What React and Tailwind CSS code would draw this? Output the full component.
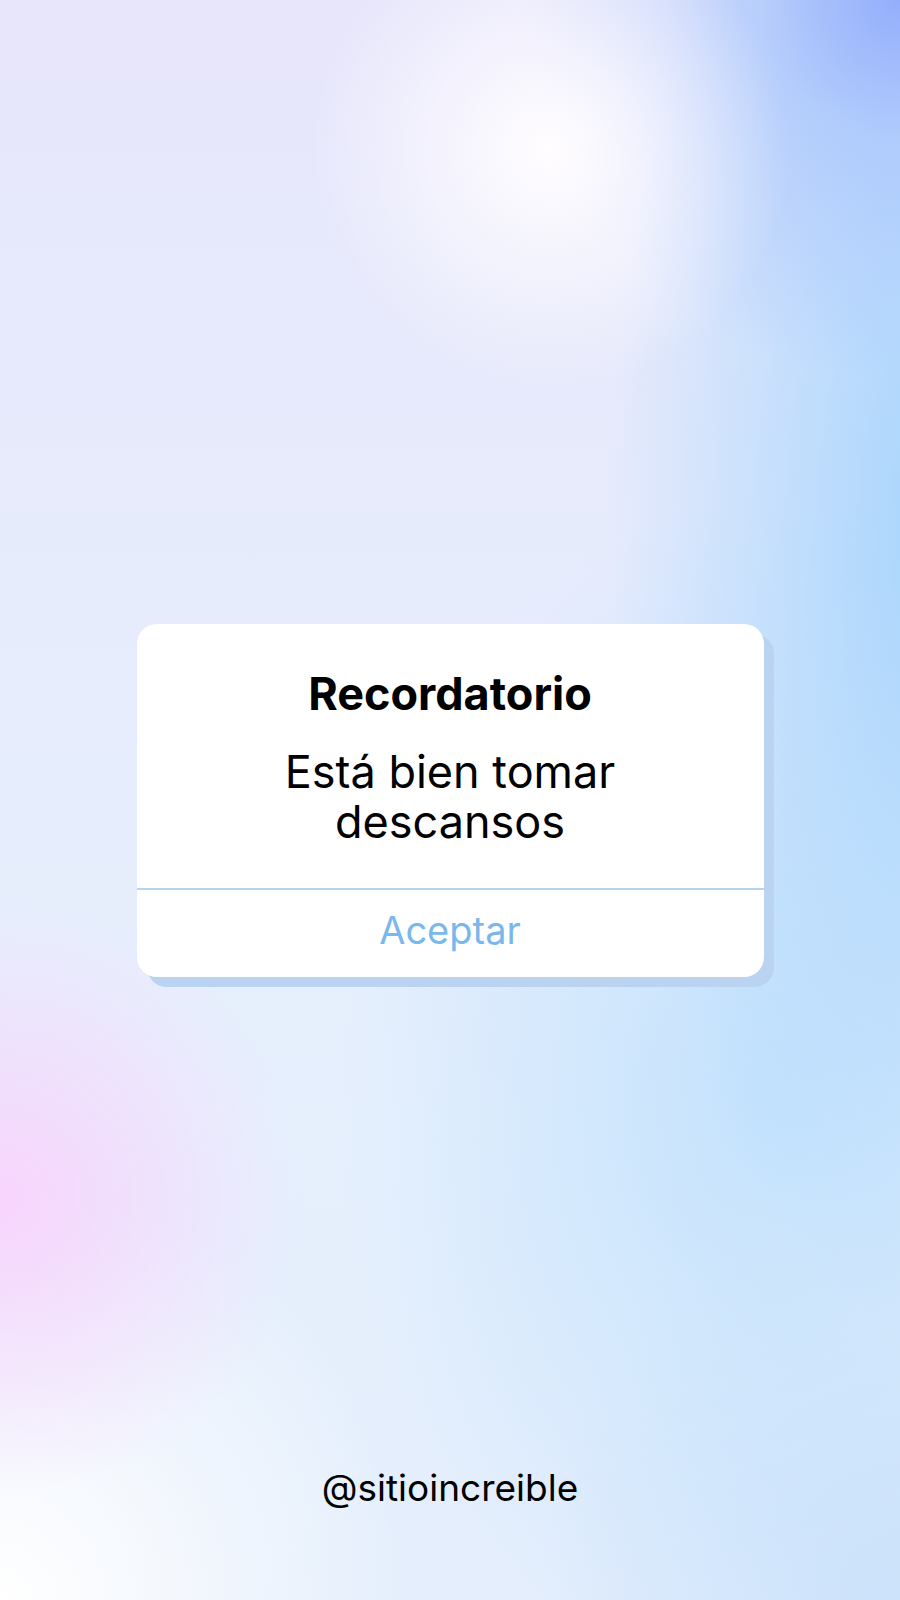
export default function App() {
  return (
    <div
      className="w-[900px] h-[1600px] flex flex-col font-['Inter',sans-serif] bg-[radial-gradient(circle_at_550px_150px,rgba(255,253,255,1)_0px,rgba(255,253,255,0)_240px),radial-gradient(circle_at_900px_0px,rgba(148,174,252,1)_0px,rgba(160,192,252,0.6)_140px,rgba(170,200,252,0)_380px),radial-gradient(ellipse_330px_820px_at_940px_520px,rgba(166,212,253,1)_0px,rgba(166,212,253,0)_100%),radial-gradient(ellipse_420px_600px_at_760px_1100px,rgba(188,223,252,0.8)_0px,rgba(188,223,252,0)_100%),radial-gradient(ellipse_360px_400px_at_900px_1600px,rgba(200,224,250,0.8)_0px,rgba(200,224,250,0)_100%),radial-gradient(circle_at_0px_1200px,rgba(248,212,252,1)_0px,rgba(248,212,252,0)_300px),radial-gradient(circle_at_0px_1600px,rgba(255,255,255,1)_0px,rgba(255,255,255,0)_420px),linear-gradient(180deg,#e7e6fb_0%,#e6ecfc_40%,#e6f0fd_70%,#e4eefc_100%)]"
    >
      <div className="flex-1" />
      <div className="mx-auto w-[627px] bg-white rounded-[20px] shadow-[10px_10px_0_0_#b9d3f0] flex flex-col items-center">
        <div className="pt-[45px] text-[45px] leading-[50px] font-bold text-black">
          Recordatorio
        </div>
        <div className="mt-[28px] text-[45px] leading-[50px] text-black text-center">
          Está bien tomar
          <br />
          descansos
        </div>
        <div className="mt-[41px] w-full h-[2px] bg-[#b5d5ef]" />
        <div className="w-full h-[87px] pb-[6px] flex items-center justify-center text-[38px] text-[#7ab7ec]">
          Aceptar
        </div>
      </div>
      <div className="flex-1 flex flex-col justify-end items-center">
        <div className="pb-[92px] text-[37px] leading-[40px] text-black">@sitioincreible</div>
      </div>
    </div>
  );
}
